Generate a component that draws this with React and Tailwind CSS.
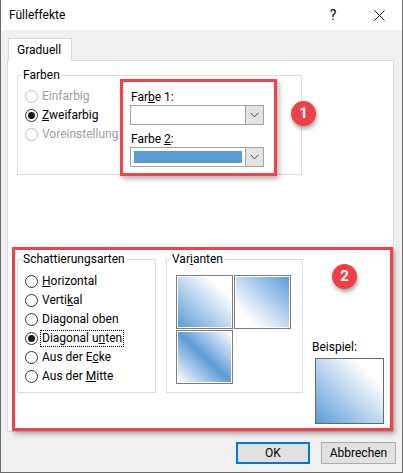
import React from 'react';

const BLUE = '#5b9bd5';

function Mn({ children }) {
  // mnemonic letter (Alt key underline)
  return <span className="underline underline-offset-[1px] decoration-1">{children}</span>;
}

function Radio({ checked, disabled, focused, children }) {
  return (
    <div className="flex items-center h-[19px] whitespace-nowrap">
      <span
        className={`w-[13px] h-[13px] shrink-0 rounded-full border bg-white flex items-center justify-center ${
          disabled ? 'border-[#bcbcbc]' : 'border-[#333333]'
        }`}
      >
        {checked && <span className="w-[7px] h-[7px] rounded-full bg-[#1a1a1a]" />}
      </span>
      <span
        className={`ml-[2px] px-[1px] leading-[15px] border ${
          focused ? 'border-dotted border-black' : 'border-transparent'
        } ${disabled ? 'text-[#9d9d9d]' : 'text-black'}`}
      >
        {children}
      </span>
    </div>
  );
}

function Group({ label, className = '', children }) {
  return (
    <div className={`relative border border-[#dcdcdc] ${className}`}>
      <span className="absolute left-[4px] -top-[8px] bg-white px-[1px] leading-[14px] whitespace-nowrap">
        {label}
      </span>
      {children}
    </div>
  );
}

function Chevron() {
  return (
    <svg width="9" height="6" viewBox="0 0 9 6">
      <polyline points="0.5,0.8 4.5,4.8 8.5,0.8" fill="none" stroke="#404040" strokeWidth="1" />
    </svg>
  );
}

function Combo({ color }) {
  return (
    <div className="flex w-[134px] h-[20px] border border-[#a3a3a3] bg-white">
      <div className="flex-1 p-[3px]">
        {color && <div className="w-full h-full" style={{ backgroundColor: color }} />}
      </div>
      <div className="w-[18px] border-l border-[#a3a3a3] bg-[#e3e3e3] flex items-center justify-center">
        <Chevron />
      </div>
    </div>
  );
}

function Badge({ n, className }) {
  return (
    <div
      className={`absolute w-[25px] h-[25px] rounded-full bg-[#ef4046] text-white font-bold text-[15px] flex items-center justify-center shadow-[1px_3px_4px_rgba(0,0,0,0.35)] ${className}`}
    >
      {n}
    </div>
  );
}

function Tile({ grad }) {
  return (
    <div className="w-[57px] h-[54px] border border-[#7d7d7d] bg-white p-px">
      <div className={`w-full h-full ${grad}`} />
    </div>
  );
}

export default function App() {
  return (
    <div className="w-[403px] h-[473px] flex flex-col bg-[#f0f0f0] border-x border-b border-[#6b6b6b] font-['Roboto',sans-serif] text-[12px] text-black">
      {/* Title bar */}
      <div className="h-[30px] bg-white flex items-center pl-[8px] shrink-0">
        <span>Fülleffekte</span>
        <div className="ml-auto flex h-full">
          <div className="w-[46px] flex items-center justify-center text-[14px]">?</div>
          <div className="w-[46px] flex items-center justify-center">
            <svg width="11" height="11" viewBox="0 0 11 11">
              <path d="M0.5 0.5 L10.5 10.5 M10.5 0.5 L0.5 10.5" stroke="#111" strokeWidth="1" />
            </svg>
          </div>
        </div>
      </div>

      <div className="flex-1 px-[6px] pt-[8px] flex flex-col">
        {/* Tab strip */}
        <div className="flex">
          <div className="ml-[1px] w-[64px] h-[23px] -mb-px relative z-10 bg-white border border-b-0 border-[#d9d9d9] flex items-center pl-[8px]">
            Graduell
          </div>
        </div>

        {/* Tab panel */}
        <div className="w-[387px] h-[372px] border border-[#d9d9d9] bg-white flex flex-col">
          <div className="pt-[14px] pl-[9px]">
            <Group label="Farben" className="w-[285px] h-[100px] flex">
              <div className="w-[102px] pl-[7px] pt-[11px] flex flex-col">
                <Radio disabled>Einfarbig</Radio>
                <Radio checked>
                  <Mn>Z</Mn>weifarbig
                </Radio>
                <Radio disabled>Voreinstellung</Radio>
              </div>
              <div className="mt-[3px] w-[157px] h-[97px] shrink-0 border-[3px] border-[#f04349] bg-white shadow-[2px_3px_5px_rgba(0,0,0,0.3)] pl-[7px] pt-[8px] flex flex-col">
                <div className="leading-[14px] pl-[1px]">
                  Far<Mn>b</Mn>e 1:
                </div>
                <div className="mt-[1px]">
                  <Combo />
                </div>
                <div className="mt-[7px] leading-[14px] pl-[1px]">
                  Farbe <Mn>2</Mn>:
                </div>
                <div className="mt-[1px]">
                  <Combo color={BLUE} />
                </div>
              </div>
              <Badge n="1" className="left-[273px] top-[25px]" />
            </Group>
          </div>

          {/* Shading section */}
          <div className="mt-auto ml-[4px] w-[381px] h-[184px] relative border-[3px] border-[#f04349] shadow-[2px_3px_5px_rgba(0,0,0,0.3)] pt-[9px] pl-[2px] flex">
            <Group label="Schattierungsarten" className="w-[139px] h-[134px] pl-[7px] pt-[12px]">
              <Radio>
                <Mn>H</Mn>orizontal
              </Radio>
              <Radio>
                Verti<Mn>k</Mn>al
              </Radio>
              <Radio>
                Dia<Mn>g</Mn>onal oben
              </Radio>
              <Radio checked focused>
                Diagonal u<Mn>n</Mn>ten
              </Radio>
              <Radio>
                Aus der E<Mn>c</Mn>ke
              </Radio>
              <Radio>
                Aus der <Mn>M</Mn>itte
              </Radio>
            </Group>

            <Group
              label={
                <>
                  Var<Mn>i</Mn>anten
                </>
              }
              className="ml-[10px] w-[137px] h-[134px] pl-[9px] pt-[15px]"
            >
              <div className="grid grid-cols-[57px_57px] gap-x-[1px] gap-y-[1px]">
                <Tile grad="bg-linear-to-tr from-[#5b9bd5] to-white to-80%" />
                <Tile grad="bg-linear-to-bl from-[#5b9bd5] to-white to-80%" />
                <Tile grad="bg-linear-to-tr from-white via-[#5b9bd5] to-white" />
              </div>
            </Group>

            <div className="ml-[9px] flex flex-col justify-end pb-[4px]">
              <div className="leading-[14px] mb-[4px]">Beispiel:</div>
              <div className="ml-[3px] w-[69px] h-[66px] border border-[#6b6b6b] bg-linear-to-tr from-[#5b9bd5] to-white to-80%" />
            </div>

            <Badge n="2" className="left-[317px] top-[14px]" />
          </div>
        </div>

        {/* Buttons */}
        <div className="pt-[10px] flex justify-end gap-[11px]">
          <button className="w-[74px] h-[22px] border-2 border-[#0078d7] bg-[#e1e1e1] flex items-center justify-center">
            OK
          </button>
          <button className="w-[75px] h-[22px] border border-[#adadad] bg-[#e1e1e1] flex items-center justify-center">
            Abbrechen
          </button>
        </div>
      </div>
    </div>
  );
}
